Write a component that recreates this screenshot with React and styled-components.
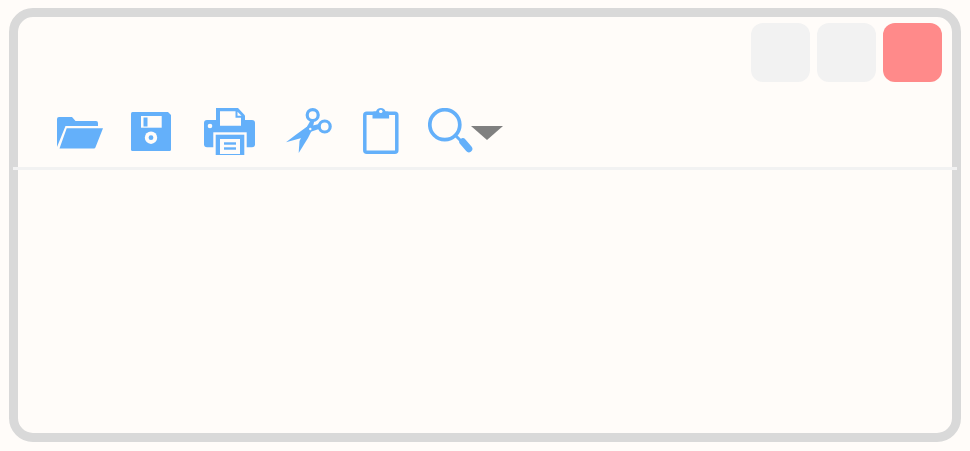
import styled, { createGlobalStyle } from "styled-components"

const Page = createGlobalStyle`
  html, body {
    margin: 0;
    background: #fffcf9;
  }
`

const Win = styled.div`
  box-sizing: border-box;
  width: 952px;
  height: 434px;
  margin: 8px 0 0 9px;
  border: 9px solid #d9d9d9;
  border-radius: 24px;
  background: #fffcf9;
`

const TitleBar = styled.div`
  display: flex;
  justify-content: flex-end;
  gap: 7px;
  padding: 6px 10px 0 0;
`

const WinButton = styled.div`
  width: 59px;
  height: 59px;
  border-radius: 12px;
  background: ${(p) => (p.$close ? "#ff8a8a" : "#f2f2f2")};
`

const Toolbar = styled.div`
  display: flex;
  align-items: flex-start;
  height: 59px;
  padding: 26px 0 0 39px;
`

const Icon = styled.svg`
  display: block;
  flex: none;
  margin-top: ${(p) => p.$top || 0}px;
  margin-left: ${(p) => p.$left || 0}px;
  fill: #64b0fa;
`

const Divider = styled.div`
  height: 3px;
  margin: 0 -5px;
  background: #f2f2f2;
`

function FolderIcon() {
  return (
    <Icon $top={8} width="46" height="33" viewBox="0 0 46 33">
      <path d="M0 3q0-2 2-2h13l3.500 4H39q2 0 2 2v3H8.500L0 31z" />
      <path d="M9.700 12.300H46L38.500 31.200q-.4 1.200-1.600 1.200H2.500z" />
    </Icon>
  )
}

function SaveIcon() {
  return (
    <Icon $top={4} $left={28} width="40" height="39" viewBox="0 0 40 39">
      <path d="M1.500 0H37l3 3v34.500q0 1.500-1.500 1.500h-37Q0 39 0 37.500v-36Q0 0 1.500 0z" />
      <rect x="10" y="4" width="20.700" height="11.700" fill="#fffcf9" />
      <rect x="12.500" y="5.500" width="4" height="9" />
      <circle cx="20" cy="25.700" r="6.200" fill="#fffcf9" />
      <circle cx="20" cy="25.700" r="2.400" />
    </Icon>
  )
}

function PrintIcon() {
  return (
    <Icon $left={33} width="52" height="47" viewBox="0 0 52 47">
      <rect x="0" y="12" width="51" height="27.300" rx="3" />
      <path d="M12 0h22l7 7.500V20H12z" />
      <path d="M16 3.300h15.500v6.400H37v8H16z" fill="#fffcf9" />
      <path d="M33.500 3.800l4 4h-4z" fill="#fffcf9" />
      <circle cx="6" cy="18" r="2.300" fill="#fffcf9" />
      <rect x="9.300" y="24.300" width="33.400" height="22.700" fill="#fffcf9" />
      <rect x="11.700" y="26.700" width="28.600" height="20.300" />
      <rect x="16" y="31" width="20" height="15" fill="#fffcf9" />
      <rect x="20" y="34.300" width="12" height="2.400" />
      <rect x="20" y="39.300" width="12" height="2.400" />
    </Icon>
  )
}

function CutIcon() {
  return (
    <Icon $left={30} width="46" height="45" viewBox="0 0 46 45">
      <circle cx="26.700" cy="7.100" r="5.500" fill="none" stroke="#64b0fa" strokeWidth="3.200" />
      <circle cx="38.700" cy="18.500" r="5.500" fill="none" stroke="#64b0fa" strokeWidth="3.200" />
      <path d="M24.500 12.500l3.500 1.500-1.500 7-4.500 9-9.300 15 .8-12 5.500-11z" />
      <path d="M33 16l1.500 4.500-9 3-10 6.500L0 34.300l9.500-7.300 11-8z" />
      <circle cx="24.300" cy="21" r="1.200" fill="#fffcf9" />
    </Icon>
  )
}

function PasteIcon() {
  return (
    <Icon $left={31} width="36" height="46" viewBox="0 0 36 46">
      <rect x="1.800" y="5.200" width="32" height="39" rx="2" fill="none" stroke="#64b0fa" strokeWidth="3.500" />
      <path d="M9.500 10.500V5q0-1.500 1.500-1.500h2Q14 0 17.800 0t4.800 3.500h2q1.500 0 1.500 1.500v5.500z" />
      <circle cx="17.800" cy="3.400" r="1.700" fill="#fffcf9" />
    </Icon>
  )
}

function SearchIcon() {
  return (
    <Icon $left={29} width="45" height="45" viewBox="0 0 45 45">
      <circle cx="16.800" cy="16.700" r="15" fill="none" stroke="#64b0fa" strokeWidth="3.700" />
      <path d="M27.500 27.500l7 7" stroke="#64b0fa" strokeWidth="3" />
      <path d="M34.800 33.800l6 7" stroke="#64b0fa" strokeWidth="7" strokeLinecap="round" />
    </Icon>
  )
}

function ArrowIcon() {
  return (
    <Icon $top={18} $left={-2} width="32" height="14" viewBox="0 0 32 14">
      <path d="M0 0h32L16 14z" fill="#808080" />
    </Icon>
  )
}

export default function App() {
  return (
    <>
      <Page />
      <Win>
        <TitleBar>
          <WinButton />
          <WinButton />
          <WinButton $close />
        </TitleBar>
        <Toolbar>
          <FolderIcon />
          <SaveIcon />
          <PrintIcon />
          <CutIcon />
          <PasteIcon />
          <SearchIcon />
          <ArrowIcon />
        </Toolbar>
        <Divider />
      </Win>
    </>
  )
}
